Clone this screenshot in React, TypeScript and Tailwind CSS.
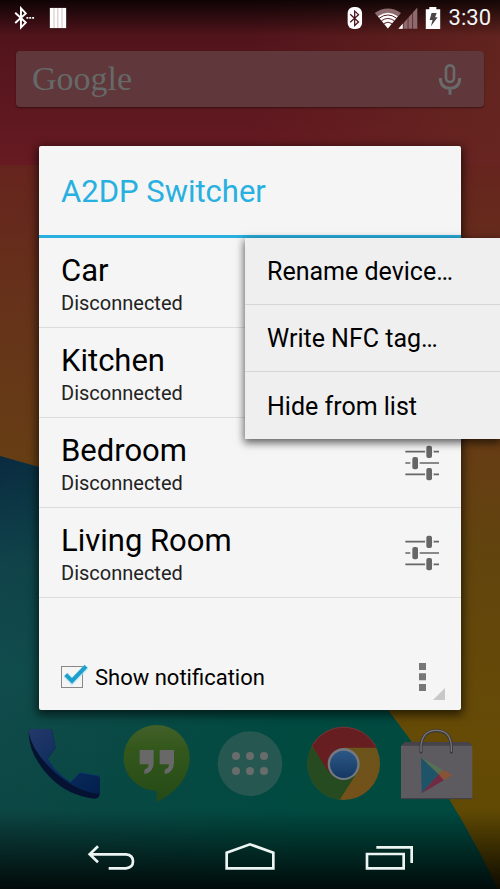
import React, { useState } from 'react'

interface IconProps {
  viewBox: string
  className: string
  children: React.ReactNode
}

const devices = ['Car', 'Kitchen', 'Bedroom', 'Living Room']
const menuItems = ['Rename device…', 'Write NFC tag…', 'Hide from list']

const Icon = (props: IconProps) => (
  <svg viewBox={props.viewBox} className={props.className} fill="none" aria-hidden="true">
    {props.children}
  </svg>
)

const Wallpaper = () => (
  <svg className="absolute inset-0 w-full h-full" viewBox="0 0 500 889" preserveAspectRatio="none" aria-hidden="true">
    <defs>
      <linearGradient id="red" x1="0" y1="0" x2="0" y2="1">
        <stop offset="0" stopColor="#4b1219" />
        <stop offset="0.45" stopColor="#58161d" />
        <stop offset="1" stopColor="#671a22" />
      </linearGradient>
      <linearGradient id="redRight" x1="0" y1="0" x2="1" y2="0">
        <stop offset="0.5" stopColor="#682a20" stopOpacity="0" />
        <stop offset="1" stopColor="#682a20" stopOpacity="0.7" />
      </linearGradient>
      <linearGradient id="orange" x1="0" y1="165" x2="0" y2="889" gradientUnits="userSpaceOnUse">
        <stop offset="0" stopColor="#66241e" />
        <stop offset="0.2" stopColor="#66331a" />
        <stop offset="0.4" stopColor="#663d14" />
        <stop offset="0.55" stopColor="#61450d" />
        <stop offset="0.8" stopColor="#664b06" />
        <stop offset="1" stopColor="#5a4700" />
      </linearGradient>
      <linearGradient id="teal" x1="0" y1="456" x2="0" y2="889" gradientUnits="userSpaceOnUse">
        <stop offset="0" stopColor="#0a2a40" />
        <stop offset="0.25" stopColor="#10434a" />
        <stop offset="0.5" stopColor="#114c4c" />
        <stop offset="1" stopColor="#0a4340" />
      </linearGradient>
      <linearGradient id="tealRight" x1="0" y1="0" x2="1" y2="0">
        <stop offset="0" stopColor="#004a40" stopOpacity="0" />
        <stop offset="0.6" stopColor="#004a40" />
      </linearGradient>
      <linearGradient id="topFade" x1="0" y1="0" x2="0" y2="1">
        <stop offset="0" stopColor="#000" stopOpacity="0.8" />
        <stop offset="1" stopColor="#000" stopOpacity="0" />
      </linearGradient>
      <linearGradient id="bottomFade" x1="0" y1="0" x2="0" y2="1">
        <stop offset="0" stopColor="#000" stopOpacity="0" />
        <stop offset="1" stopColor="#000" stopOpacity="0.85" />
      </linearGradient>
    </defs>
    <rect width="500" height="889" fill="url(#orange)" />
    <rect width="500" height="165" fill="url(#red)" />
    <rect width="500" height="165" fill="url(#redRight)" />
    <path d="M0 456L39 467Q270 545 388 710Q450 790 498 889H0Z" fill="url(#teal)" />
    <path d="M0 456L39 467Q270 545 388 710Q450 790 498 889H0Z" fill="url(#tealRight)" />
    <rect width="500" height="36" fill="url(#topFade)" />
    <rect y="810" width="500" height="79" fill="url(#bottomFade)" />
  </svg>
)

const StatusBar = () => (
  <header className="flex items-center justify-between h-9 pl-3 pr-[9px]">
    <div className="flex items-center gap-3">
      {/*bluetooth connecting*/}
      <Icon viewBox="36 15 75 75" className="w-6 h-6">
        <path d="M46 36L79 67L64 82V22L79 38L46 68" stroke="#fff" strokeWidth="6" />
        <path d="M81 49h6v6h-6zM90 49h6v6h-6zM99 49h6v6h-6z" fill="#fff" />
      </Icon>
      {/*bars*/}
      <Icon viewBox="147 15 57 75" className="w-5 h-6">
        <rect x="150" y="21" width="51" height="63" fill="#fff" />
        <path d="M163 21V84M175 21V84M188 21V84" stroke="#b39c9f" strokeWidth="2" />
      </Icon>
    </div>

    <div className="flex items-center">
      {/*bluetooth*/}
      <Icon viewBox="290 12 48 75" className="w-4 h-6">
        <rect x="291" y="15" width="45" height="69" rx="19" fill="#fff" />
        <path d="M299 38L325 62L313 73V28L325 39L299 63" stroke="#4b1219" strokeWidth="4" />
      </Icon>
      {/*wifi and cell signal*/}
      <Icon viewBox="370 12 141 75" className="w-12 h-6 ml-2.5">
        <path d="M412 82L371 34Q412 6 453 34Z" fill="#8c6a6d" />
        <path d="M412 82L381 44Q412 22 443 44Z" fill="#fff" />
        <path d="M385 50Q412 30 439 50M392 58Q412 44 432 58M399 67Q412 58 425 67" stroke="#4b1219" strokeWidth="3" />
        <path d="M445 83L504 17V83Z" fill="#8c6a6d" />
        <path d="M445 83L459 67V83Z" fill="#fff" />
        <path d="M460 60V84M475 45V84M489 30V84" stroke="#4b1219" strokeWidth="2" />
      </Icon>
      {/*battery*/}
      <Icon viewBox="520 12 57 75" className="w-5 h-6 ml-0.5">
        <path d="M537 15H559V22H571V84H526V22H537Z" fill="#fff" />
        <path d="M544 34H560L555 47H563L542 75L547 56H538Z" fill="#4a4547" />
      </Icon>
      <span className="ml-1.5 text-[22px] leading-9 text-gray-100">3:30</span>
    </div>
  </header>
)

const SearchBar = () => (
  <div className="flex items-center justify-between h-14 mt-[15px] mx-4 px-4 rounded-sm bg-[#60373b] shadow-[0_1px_2px_rgba(0,0,0,0.4)]">
    <span className="font-['Liberation_Serif',serif] text-[34px] leading-10 text-[#666968]">Google</span>
    <button type="button" aria-label="Voice search" className="pr-1.5">
      <Icon viewBox="564 186 72 102" className="w-6 h-[34px]">
        <rect x="588" y="196" width="24" height="50" rx="12" stroke="#686b6a" strokeWidth="8" />
        <path d="M571 234Q571 264 600 265Q629 264 629 234M600 265V284" stroke="#686b6a" strokeWidth="9" />
      </Icon>
    </button>
  </div>
)

const DeviceRow = (props: { name: string }) => (
  <li className="flex items-center justify-between h-[90px] pl-[22px] pr-[22px] border-b border-[#dcdcdc]">
    <div>
      <h2 className="text-[31px] leading-10 text-black">{props.name}</h2>
      <p className="text-xl leading-6 text-[#222]">Disconnected</p>
    </div>
    <button type="button" aria-label={`${props.name} options`}>
      <Icon viewBox="45 42 102 108" className="w-[34px] h-9">
        <path d="M46 62H147M46 96H147M46 130H147" stroke="#666" strokeWidth="5" />
        <path d="M105 62H131M61 96H89M105 130H131" stroke="#f5f5f5" strokeWidth="7" />
        <rect x="109" y="44" width="17" height="37" rx="6" fill="#666" />
        <rect x="67" y="78" width="17" height="37" rx="6" fill="#666" />
        <rect x="109" y="111" width="17" height="37" rx="6" fill="#666" />
      </Icon>
    </button>
  </li>
)

const Dock = () => (
  <div className="flex justify-around mt-[10px] px-[18px]">
    {/*phone*/}
    <button type="button" aria-label="Phone">
      <Icon viewBox="66 240 252 252" className="w-[84px] h-[84px]">
        <defs>
          <linearGradient id="phone" x1="0" y1="0" x2="1" y2="1">
            <stop offset="0" stopColor="#24396a" />
            <stop offset="0.5" stopColor="#0c2c5c" />
            <stop offset="1" stopColor="#02204f" />
          </linearGradient>
        </defs>
        <path d="M94 267H150Q155 267 156 272L167 323L143 356Q165 398 212 427L240 398L292 407Q299 408 299 415V462Q298 476 284 476Q205 468 150 412Q86 345 86 276Q86 268 94 267Z" fill="#051231" />
        <path d="M94 267H150Q155 267 156 272L167 323L143 356Q165 398 212 427L240 398L292 407Q299 408 299 415V462Q230 455 166 398Q96 335 86 276Q86 268 94 267Z" fill="url(#phone)" />
        <path d="M143 356Q165 398 212 427L240 398L296 408" stroke="#0c3a75" strokeWidth="2" />
      </Icon>
    </button>

    {/*hangouts*/}
    <button type="button" aria-label="Hangouts">
      <Icon viewBox="346 240 252 252" className="w-[84px] h-[84px]">
        <defs>
          <linearGradient id="hangouts" x1="0" y1="0" x2="0" y2="1">
            <stop offset="0" stopColor="#43602a" />
            <stop offset="0.3" stopColor="#34581c" />
            <stop offset="1" stopColor="#254a16" />
          </linearGradient>
        </defs>
        <path d="M471 255A99 98 0 0 1 570 353C570 415 520 465 471 485V452A99 98 0 1 1 471 255Z" fill="url(#hangouts)" />
        <path d="M420 330H462V366Q462 398 434 402V389Q447 386 447 373H420ZM480 330H523V366Q523 398 495 402V389Q508 386 508 373H480Z" fill="#686868" />
      </Icon>
    </button>

    {/*all apps*/}
    <button type="button" aria-label="Apps">
      <Icon viewBox="624 240 252 252" className="w-[84px] h-[84px]">
        <circle cx="750" cy="371" r="97" fill="#265851" />
        {[708, 750, 792].map((x) => (
          <g key={x} fill="#686c6b">
            <circle cx={x} cy="348" r="12" />
            <circle cx={x} cy="393" r="12" />
          </g>
        ))}
      </Icon>
    </button>

    {/*chrome*/}
    <button type="button" aria-label="Chrome">
      <Icon viewBox="152 240 252 252" className="w-[84px] h-[84px]">
        <defs>
          <linearGradient id="chromeBlue" x1="0" y1="0" x2="0" y2="1">
            <stop offset="0" stopColor="#2c5885" />
            <stop offset="1" stopColor="#153863" />
          </linearGradient>
          <linearGradient id="chromeYellow" x1="0" y1="0" x2="0" y2="1">
            <stop offset="0" stopColor="#685519" />
            <stop offset="1" stopColor="#74511a" />
          </linearGradient>
        </defs>
        <circle cx="280" cy="371" r="109" fill="url(#chromeYellow)" />
        <path d="M280 371L238 395L184 318A109 109 0 0 0 268 479L322 395Z" fill="#264b20" />
        <path d="M185 318A109 109 0 0 1 378 323H280L238 400Z" fill="#671e20" />
        <path d="M187 314A109 109 0 0 1 376 318" stroke="#7a3038" strokeWidth="3" />
        <circle cx="280" cy="372" r="48" fill="#747880" />
        <circle cx="280" cy="373" r="41" fill="url(#chromeBlue)" />
      </Icon>
    </button>

    {/*play store*/}
    <button type="button" aria-label="Play Store">
      <Icon viewBox="431 240 252 252" className="w-[84px] h-[84px]">
        <path d="M463 306H656L666 318H452Z" fill="#46444a" />
        <path d="M452 317H666V477H452Z" fill="#5d5a60" />
        <path d="M452 476H666" stroke="#3f3c42" strokeWidth="3" />
        <path d="M512 336V318Q516 272 558 272Q600 272 603 318V336" stroke="#38373c" strokeWidth="9" strokeLinecap="round" />
        <path d="M512 334V318Q516 271 558 271Q600 271 603 318V334" stroke="#77757b" strokeWidth="4" strokeLinecap="round" />
        <path d="M512 352L565 403L514 460Z" fill="#1f5368" />
        <path d="M512 352L578 389L565 403Z" fill="#567056" />
        <path d="M578 389L606 406L580 421L563 403Z" fill="#895338" />
        <path d="M514 460L565 403L580 421Z" fill="#702b42" />
      </Icon>
    </button>
  </div>
)

const NavBar = () => (
  <nav className="flex items-center justify-around h-[66px] px-[41px]">
    <button type="button" aria-label="Back">
      <Icon viewBox="258 603 150 93" className="w-[50px] h-[31px]">
        <path d="M294 619L269 643L294 667M269 643H378Q399 645 399 664Q399 683 378 685H326" stroke="#edf5f2" strokeWidth="8" />
      </Icon>
    </button>
    <button type="button" aria-label="Home">
      <Icon viewBox="675 603 150 93" className="w-[50px] h-[31px]">
        <path d="M680 685V638L750 613L820 638V685Z" stroke="#edf5f2" strokeWidth="8" />
      </Icon>
    </button>
    <button type="button" aria-label="Recent apps">
      <Icon viewBox="345 603 150 93" className="w-[50px] h-[31px]">
        <path d="M354 642H464V685H354Z" stroke="#edf5f2" strokeWidth="8" />
        <path d="M382 622H488V669" stroke="#edf5f2" strokeWidth="8" />
      </Icon>
    </button>
  </nav>
)

const App = () => {
  const [showNotification, setShowNotification] = useState(true)

  return (
    <div className="relative min-h-screen overflow-hidden font-[Roboto,sans-serif]">
      <Wallpaper />

      <div className="relative flex flex-col min-h-screen">
        <StatusBar />
        <SearchBar />

        {/*Dialog*/}
        <main className="relative z-10 mt-[39px] mx-[39px] rounded-xs bg-[#f5f5f5] shadow-[0_3px_10px_2px_rgba(0,0,0,0.6)]">
          <h1 className="px-[22px] pt-[26px] pb-[23px] border-b-[3px] border-[#27b0e0] text-[31px] leading-10 text-[#27b0e0]">A2DP Switcher</h1>

          <div className="relative">
            <ul>
              {devices.map((name) => (
                <DeviceRow key={name} name={name} />
              ))}
            </ul>

            {/*Popup menu*/}
            <div role="menu" className="absolute top-0 -right-[39px] w-[255px] bg-[#efefef] shadow-[0_3px_8px_1px_rgba(0,0,0,0.6)] divide-y divide-[#d6d6d6]">
              {menuItems.map((item) => (
                <button key={item} type="button" role="menuitem" className="block w-full h-[67px] pt-0.5 px-[22px] text-left text-[25px] text-black">
                  {item}
                </button>
              ))}
            </div>
          </div>

          {/*Footer*/}
          <div className="flex items-center justify-between h-[66px] mt-[46px] pl-[22px] pr-[34px]">
            <label className="flex items-center gap-3 text-[22px] text-black">
              <span className="relative flex">
                <input
                  type="checkbox"
                  checked={showNotification}
                  onChange={() => setShowNotification(!showNotification)}
                  className="peer appearance-none w-[22px] h-[22px] border border-[#888]"
                />
                <svg viewBox="180 66 84 84" className="absolute -top-1 -left-px w-7 h-7 hidden peer-checked:block pointer-events-none" fill="none">
                  <path d="M197 104L216 124L260 79" stroke="#a5e0f2" strokeWidth="18" opacity="0.6" />
                  <path d="M197 104L216 123L258 79" stroke="#1b9fcd" strokeWidth="12" />
                </svg>
              </span>
              Show notification
            </label>
            <button type="button" aria-label="More options" className="relative">
              <Icon viewBox="504 66 27 90" className="w-[9px] h-[30px]">
                <path d="M507 69h21v21h-21zM507 100h21v21h-21zM507 132h21v21h-21z" fill="#777" />
              </Icon>
              <svg viewBox="0 0 12 12" className="absolute top-[26px] left-[15px] w-3 h-3" aria-hidden="true">
                <path d="M12 0V12H0Z" fill="#c8c8c8" />
              </svg>
            </button>
          </div>
        </main>

        <Dock />
        <div className="flex-1" />
        <NavBar />
      </div>
    </div>
  )
}

export default App
